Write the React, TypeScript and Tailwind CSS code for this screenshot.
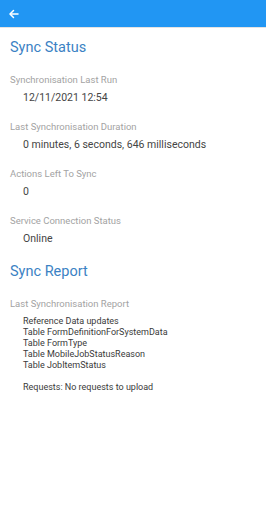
const roboto = { fontFamily: 'Roboto, "Noto Sans", sans-serif' };

function Field({ label, value }: { label: string; value: string }) {
    return (
        <div className="flex flex-col">
            <div className="text-[9.5px] leading-[14px] text-[#a3a3a3]">{label}</div>
            <div className="mt-[4px] pl-[13px] text-[10.5px] leading-[14px] text-[#454545]">{value}</div>
        </div>
    );
}

export default function App() {
    return (
        <div className="w-[266px] h-[529px] bg-white flex flex-col" style={roboto}>
            {/* top bar */}
            <div className="h-[27px] bg-[#2196f3] flex items-center px-[8px] shrink-0">
                <svg width="12" height="12" viewBox="0 0 24 24" fill="none" stroke="white" strokeWidth="3" strokeLinecap="round" strokeLinejoin="round">
                    <path d="M20 12H5" />
                    <path d="M11 5l-7 7 7 7" />
                </svg>
            </div>
            <div className="h-px bg-[#e3e3e3]" />

            <main className="px-[10px] pt-[10px] flex flex-col">
                <h1 className="text-[14.5px] leading-[20px] text-[#3b82c4]">Sync Status</h1>

                <div className="mt-[15px] flex flex-col gap-[15px]">
                    <Field label="Synchronisation Last Run" value="12/11/2021 12:54" />
                    <Field label="Last Synchronisation Duration" value="0 minutes, 6 seconds, 646 milliseconds" />
                    <Field label="Actions Left To Sync" value="0" />
                    <Field label="Service Connection Status" value="Online" />
                </div>

                <h1 className="mt-[16px] text-[14.5px] leading-[20px] text-[#3b82c4]">Sync Report</h1>

                <div className="mt-[15px] text-[9.5px] leading-[14px] text-[#a3a3a3]">Last Synchronisation Report</div>
                <div className="mt-[5px] pl-[13px] text-[9px] leading-[11px] text-[#3a3a3a] whitespace-pre-line">
                    {'Reference Data updates\nTable FormDefinitionForSystemData\nTable FormType\nTable MobileJobStatusReason\nTable JobItemStatus\n\nRequests: No requests to upload'}
                </div>
            </main>
        </div>
    );
}
